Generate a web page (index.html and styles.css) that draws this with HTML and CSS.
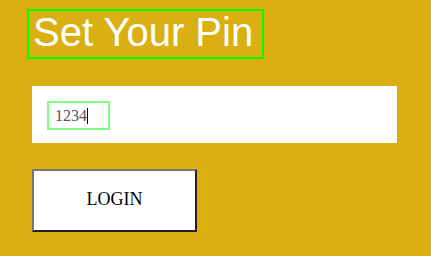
FILE: index.html
```html
<!DOCTYPE html>
<html>
<head>
<meta charset="utf-8">
<link rel="stylesheet" href="styles.css">
</head>
<body>
<div class="page">
  <h1 class="title">Set Your Pin</h1>
  <div class="panel">
    <div class="pin-input">1234<span class="caret"></span></div>
  </div>
  <button class="login" type="button">LOGIN</button>
</div>
</body>
</html>
```
FILE: styles.css
```css
html, body {
  margin: 0;
  padding: 0;
  background: #d9af11;
  width: 431px;
  height: 256px;
  overflow: hidden;
}
.page {
  display: flex;
  flex-direction: column;
  align-items: flex-start;
  padding: 9px 0 0 0;
}
.title {
  margin: 0 0 0 27px;
  box-sizing: border-box;
  width: 237px;
  height: 50px;
  border: 2px solid #00ff00;
  padding: 0 0 4px 4px;
  font-family: "Liberation Sans", Arial, sans-serif;
  font-weight: normal;
  font-size: 40px;
  line-height: 42px;
  color: #ffffff;
  white-space: nowrap;
}
.panel {
  margin: 27px 0 0 32px;
  box-sizing: border-box;
  width: 365px;
  height: 57px;
  background: #ffffff;
  padding: 15px 0 0 15px;
}
.pin-input {
  box-sizing: border-box;
  width: 63px;
  height: 29px;
  border: 2px solid #80ff80;
  padding: 0 0 0 6px;
  font-family: "Liberation Serif", "Times New Roman", serif;
  font-size: 16px;
  line-height: 25px;
  color: #555555;
}
.caret {
  display: inline-block;
  width: 1px;
  height: 16px;
  background: #000000;
  vertical-align: -3px;
}
.login {
  margin: 26px 0 0 32px;
  box-sizing: border-box;
  width: 165px;
  height: 63px;
  background: #ffffff;
  border-style: solid;
  border-width: 2px;
  border-color: #767676 #222222 #222222 #767676;
  padding: 0 0 2px 0;
  font-family: "Liberation Serif", "Times New Roman", serif;
  font-size: 18px;
  color: #000000;
  -webkit-appearance: none;
  appearance: none;
  border-radius: 0;
}
```
